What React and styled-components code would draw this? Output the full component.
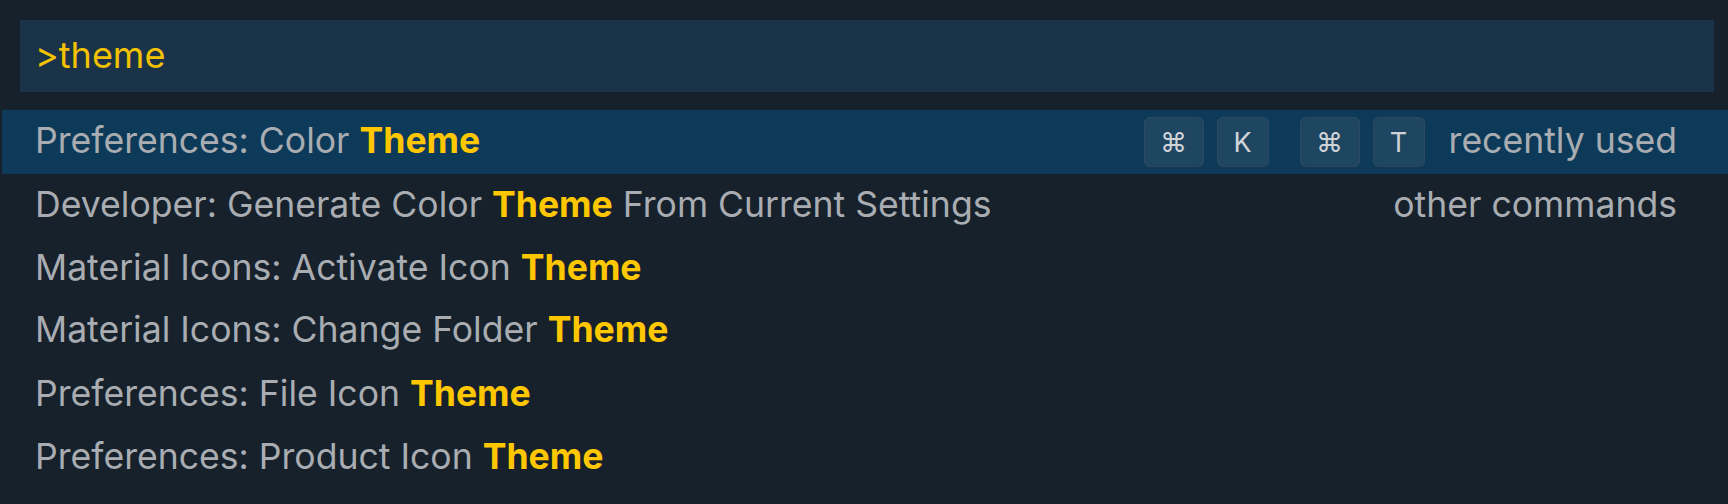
import React from "react";
import styled, { createGlobalStyle } from "styled-components";

const Global = createGlobalStyle`
  html, body { margin: 0; padding: 0; background: #16212b; }
  body { font-family: Inter, "Noto Sans", sans-serif; }
`;

const Palette = styled.div`
  width: 1728px;
  height: 504px;
  background: #16212b;
  display: flex;
  flex-direction: column;
  padding-top: 20px;
  box-sizing: border-box;
`;

const InputBox = styled.div`
  margin: 0 14px 0 20px;
  height: 72px;
  background: #1b3349;
  display: flex;
  align-items: center;
  padding: 0 0 2px 15px;
  font-size: 36px;
  color: #f2c200;
  box-sizing: border-box;
`;

const List = styled.div`
  margin-top: 18px;
  margin-left: 2px;
  display: flex;
  flex-direction: column;
`;

const Row = styled.div`
  height: ${(p) => p.$h}px;
  box-sizing: border-box;
  display: flex;
  align-items: center;
  padding: 0 51px 4px 33px;
  background: ${(p) => (p.$selected ? "#0d3a59" : "transparent")};
  font-size: 35.6px;
  color: #a9adb2;
  white-space: nowrap;
`;

const Label = styled.span`
  flex: 1;
`;

const Match = styled.span`
  color: #ffc700;
  font-weight: 700;
`;

const Keys = styled.div`
  display: flex;
  align-items: center;
  gap: 31px;
  margin-right: 24px;
  padding-top: 4px;
`;

const Chord = styled.div`
  display: flex;
  gap: 13px;
`;

const Key = styled.span`
  min-width: ${(p) => p.$w}px;
  height: 50px;
  box-sizing: border-box;
  display: inline-flex;
  align-items: center;
  justify-content: center;
  background: #1f4661;
  border: 1px solid #2c4b60;
  border-bottom-color: #2f4556;
  border-radius: 6px;
  color: #cfd3d7;
  font-size: 27px;
`;

const Note = styled.span`
  color: #a9adb2;
`;

const items = [
  { pre: "Developer: Generate Color ", post: " From Current Settings", note: "other commands", h: 64 },
  { pre: "Material Icons: Activate Icon ", h: 62 },
  { pre: "Material Icons: Change Folder ", h: 63 },
  { pre: "Preferences: File Icon ", h: 64 },
  { pre: "Preferences: Product Icon ", h: 62 },
];

export default function App() {
  return (
    <>
      <Global />
      <Palette>
        <InputBox>&gt;theme</InputBox>
        <List>
          <Row $selected $h={64}>
            <Label>
              Preferences: Color <Match>Theme</Match>
            </Label>
            <Keys>
              <Chord>
                <Key $w={60}>⌘</Key>
                <Key $w={52}>K</Key>
              </Chord>
              <Chord>
                <Key $w={60}>⌘</Key>
                <Key $w={52}>T</Key>
              </Chord>
            </Keys>
            <Note>recently used</Note>
          </Row>
          {items.map((it, i) => (
            <Row key={i} $h={it.h}>
              <Label>
                {it.pre}
                <Match>Theme</Match>
                {it.post}
              </Label>
              {it.note && <Note>{it.note}</Note>}
            </Row>
          ))}
        </List>
      </Palette>
    </>
  );
}
